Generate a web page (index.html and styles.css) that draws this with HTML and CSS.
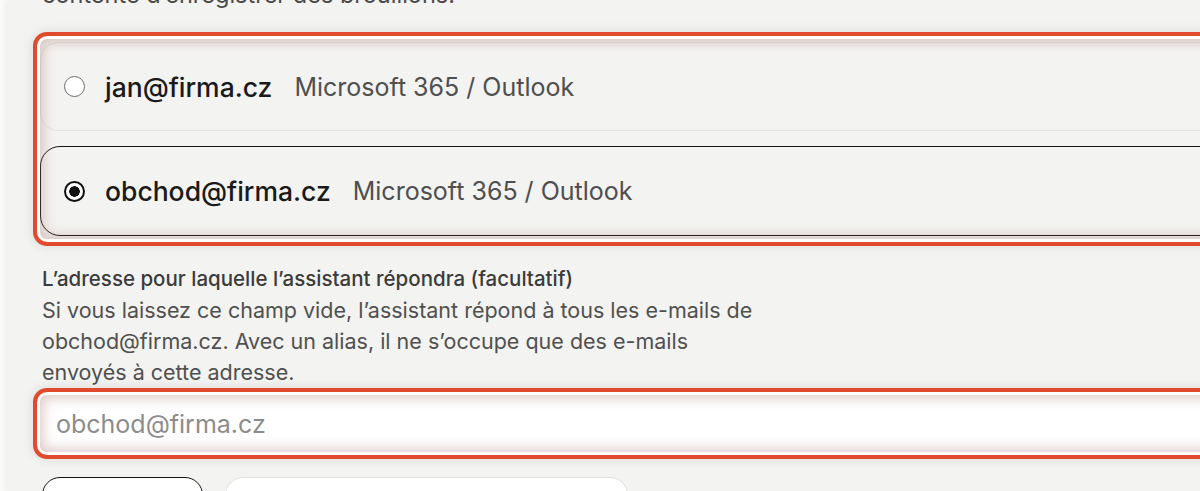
FILE: index.html
```html
<!DOCTYPE html>
<html lang="fr">
<head>
<meta charset="utf-8">
<title>Boîte de réception</title>
<link rel="stylesheet" href="styles.css">
</head>
<body>
<div class="panel">
  <p class="intro">L’assistant lit vos e-mails entrants et se<br>contente d’enregistrer des brouillons.</p>

  <div class="accounts focus-ring">
    <label class="account">
      <span class="radio"></span>
      <span class="addr">jan@firma.cz</span>
      <span class="prov">Microsoft 365 / Outlook</span>
    </label>
    <label class="account selected">
      <span class="radio"></span>
      <span class="addr">obchod@firma.cz</span>
      <span class="prov">Microsoft 365 / Outlook</span>
    </label>
  </div>

  <div class="field">
    <div class="field-label">L’adresse pour laquelle l’assistant répondra (facultatif)</div>
    <p class="field-help">Si vous laissez ce champ vide, l’assistant répond à tous les e-mails de obchod@firma.cz. Avec un alias, il ne s’occupe que des e-mails envoyés à cette adresse.</p>
    <div class="input-wrap focus-ring">
      <input class="input" type="text" placeholder="obchod@firma.cz">
    </div>
  </div>

  <div class="actions">
    <button class="btn primary">Continuer</button>
    <button class="btn secondary">Connecter une autre boîte</button>
  </div>
</div>
</body>
</html>
```

FILE: styles.css
```css
html, body {
  margin: 0;
  padding: 0;
  height: 100%;
  overflow: hidden;
  background: #fafaf9;
  font-family: Inter, "Noto Sans", sans-serif;
}

.panel {
  margin-left: 8px;
  width: 1400px;
  height: 100%;
  background: #f3f3f1;
  box-shadow: -3px 0 6px rgba(0, 0, 0, 0.05);
  padding-left: 34px;
  box-sizing: border-box;
  overflow: hidden;
}

.intro {
  margin: -52px 0 0 0;
  font-size: 23.5px;
  line-height: 31px;
  color: #4a4a4a;
}

.focus-ring {
  position: relative;
}

.focus-ring::after {
  content: "";
  position: absolute;
  inset: 0;
  border: 4px solid #e14a2d;
  border-radius: 14px;
  box-shadow:
    inset 0 0 0 3px #fff,
    inset 0 0 12px 7px rgba(165, 110, 100, 0.32),
    0 0 10px 2px rgba(0, 0, 0, 0.08);
  pointer-events: none;
}

.accounts {
  margin: 22px 0 0 -9px;
  padding: 10px 0 10px 7px;
  display: flex;
  flex-direction: column;
  gap: 15px;
}

.account {
  display: flex;
  align-items: center;
  height: 89px;
  box-sizing: border-box;
  padding-left: 23px;
  border: 1px solid #e2e2df;
  border-radius: 18px;
  background: transparent;
}

.account.selected {
  height: 90px;
  border: 1.5px solid #141414;
  border-radius: 20px;
}

.radio {
  width: 21px;
  height: 21px;
  box-sizing: border-box;
  border-radius: 50%;
  border: 1.5px solid #6b6b6b;
  background: #fff;
  flex: none;
  margin-right: 20px;
}

.selected .radio {
  border: 2px solid #111;
  background: radial-gradient(circle, #111 0 5px, #fff 5.5px);
}

.addr {
  font-size: 26.5px;
  font-weight: 500;
  color: #1a1a1a;
  margin-right: 22px;
}

.prov {
  font-size: 25px;
  color: #4f4f4f;
}

.field {
  margin-top: 17px;
}

.field-label {
  font-size: 20.5px;
  line-height: 31px;
  font-weight: 500;
  color: #3b3b3b;
}

.field-help {
  margin: 1px 0 0 0;
  max-width: 726px;
  font-size: 21.5px;
  line-height: 31px;
  color: #505050;
}

.input-wrap {
  margin: 0 0 0 -9px;
  padding: 7px 0 7px 7px;
}

.input {
  display: block;
  width: 100%;
  height: 57px;
  box-sizing: border-box;
  border: 0;
  border-radius: 10px;
  background: #fff;
  padding: 0 16px;
  font-family: Inter, "Noto Sans", sans-serif;
  font-size: 25px;
  color: #222;
  outline: none;
}

.input::placeholder {
  color: #8c8c8c;
}

.actions {
  display: flex;
  gap: 22px;
  margin-top: 18px;
}

.btn {
  height: 60px;
  border-radius: 18px;
  font-family: Inter, "Noto Sans", sans-serif;
  font-size: 20px;
  background: #fff;
  padding: 0 24px;
}

.btn.primary {
  width: 161px;
  border: 1.5px solid #141414;
  color: #141414;
}

.btn.secondary {
  width: 403px;
  border: 1px solid #e0e0dd;
  color: #333;
}
```
